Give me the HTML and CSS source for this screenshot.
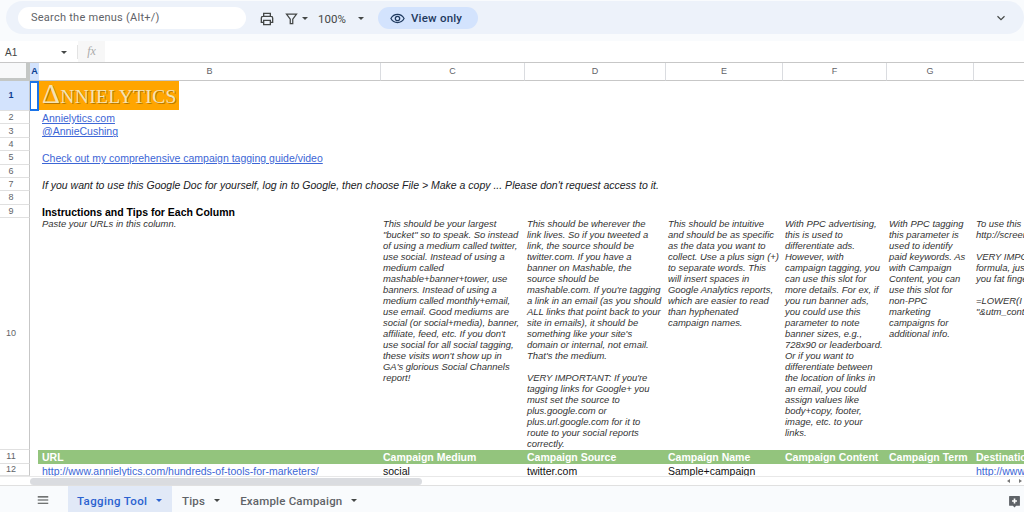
FILE: index.html
```html
<!DOCTYPE html>
<html>
<head>
<title>Campaign Tagging Tool</title>
<link rel="stylesheet" href="styles.css">
</head>
<body>
    <div class="toolbar-wrap">
        <div class="toolbar">
            <div class="search">Search the menus (Alt+/)</div>
            <svg class="icon print" viewBox="0 0 24 24"><path d="M7 8V3.5h10V8M6 17H3.5v-6.5A2.5 2.5 0 0 1 6 8h12a2.5 2.5 0 0 1 2.5 2.5V17H18M7 14h10v6.5H7z"/></svg>
            <svg class="icon filter" viewBox="0 0 24 24"><path d="M4 5h16l-6 8v7h-4v-7z"/></svg>
            <span class="caret filter-caret"></span>
            <span class="zoom-value">100%</span>
            <span class="caret zoom-caret"></span>
            <div class="view-only">
                <svg class="icon eye" viewBox="0 0 24 24"><path d="M1.5 12C4 7.5 7.5 5.5 12 5.5s8 2 10.5 6.5c-2.5 4.5-6 6.5-10.5 6.5S4 16.5 1.5 12z"/><circle cx="12" cy="12" r="3.5"/></svg>
                <span>View only</span>
            </div>
            <svg class="icon chevron" viewBox="0 0 24 24"><path d="M6 9l6 6 6-6"/></svg>
        </div>
    </div>

    <div class="formula-bar">
        <div class="name-box"><span>A1</span><span class="caret"></span></div>
        <div class="fx">fx</div>
    </div>

    <div class="sheet">
        <div class="grid">
            <div class="corner"></div>
            <div class="col-head selected">A</div>
            <div class="col-head">B</div>
            <div class="col-head">C</div>
            <div class="col-head">D</div>
            <div class="col-head">E</div>
            <div class="col-head">F</div>
            <div class="col-head">G</div>
            <div class="col-head"></div>

            <div class="row-head selected">1</div>
            <div class="cell-a1"></div>
            <div class="logo-cell"><div class="logo"><span class="logo-delta">Δ</span>NNIELYTICS</div></div>

            <div class="row-head small">2</div>
            <div class="line wide"><a href="#">Annielytics.com</a></div>
            <div class="row-head small">3</div>
            <div class="line wide"><a href="#">@AnnieCushing</a></div>
            <div class="row-head small">4</div>
            <div class="line wide"></div>
            <div class="row-head small">5</div>
            <div class="line wide"><a href="#">Check out my comprehensive campaign tagging guide/video</a></div>
            <div class="row-head small">6</div>
            <div class="line wide"></div>
            <div class="row-head small">7</div>
            <div class="line wide"><em>If you want to use this Google Doc for yourself, log in to Google, then choose File &gt; Make a copy ... Please don't request access to it.</em></div>
            <div class="row-head small">8</div>
            <div class="line wide"></div>
            <div class="row-head small">9</div>
            <div class="line wide"><strong>Instructions and Tips for Each Column</strong></div>

            <div class="row-head">10</div>
            <div class="spacer"></div>
            <div class="note">Paste your URLs in this column.</div>
            <div class="note">This should be your largest<br>"bucket" so to speak. So instead<br>of using a medium called twitter,<br>use social. Instead of using a<br>medium called<br>mashable+banner+tower, use<br>banners. Instead of using a<br>medium called monthly+email,<br>use email. Good mediums are<br>social (or social+media), banner,<br>affiliate, feed, etc. If you don't<br>use social for all social tagging,<br>these visits won't show up in<br>GA's glorious Social Channels<br>report!</div>
            <div class="note">This should be wherever the<br>link lives. So if you tweeted a<br>link, the source should be<br>twitter.com. If you have a<br>banner on Mashable, the<br>source should be<br>mashable.com. If you're tagging<br>a link in an email (as you should<br>ALL links that point back to your<br>site in emails), it should be<br>something like your site's<br>domain or internal, not email.<br>That's the medium.<br><br>VERY IMPORTANT: If you're<br>tagging links for Google+ you<br>must set the source to<br>plus.google.com or<br>plus.url.google.com for it to<br>route to your social reports<br>correctly.</div>
            <div class="note">This should be intuitive<br>and should be as specific<br>as the data you want to<br>collect. Use a plus sign (+)<br>to separate words. This<br>will insert spaces in<br>Google Analytics reports,<br>which are easier to read<br>than hyphenated<br>campaign names.</div>
            <div class="note">With PPC advertising,<br>this is used to<br>differentiate ads.<br>However, with<br>campaign tagging, you<br>can use this slot for<br>more details. For ex, if<br>you run banner ads,<br>you could use this<br>parameter to note<br>banner sizes, e.g.,<br>728x90 or leaderboard.<br>Or if you want to<br>differentiate between<br>the location of links in<br>an email, you could<br>assign values like<br>body+copy, footer,<br>image, etc. to your<br>links.</div>
            <div class="note">With PPC tagging<br>this parameter is<br>used to identify<br>paid keywords. As<br>with Campaign<br>Content, you can<br>use this slot for<br>non-PPC<br>marketing<br>campaigns for<br>additional info.</div>
            <div class="note">To use this<br>http://screen<br><br>VERY IMPO<br>formula, jus<br>you fat finge<br><br>=LOWER(I<br>"&amp;utm_cont</div>

            <div class="row-head">11</div>
            <div class="spacer"></div>
            <div class="th first">URL</div>
            <div class="th">Campaign Medium</div>
            <div class="th">Campaign Source</div>
            <div class="th">Campaign Name</div>
            <div class="th">Campaign Content</div>
            <div class="th">Campaign Term</div>
            <div class="th">Destination</div>

            <div class="row-head">12</div>
            <div class="spacer"></div>
            <div class="td first"><a href="#">http://www.annielytics.com/hundreds-of-tools-for-marketers/</a></div>
            <div class="td">social</div>
            <div class="td">twitter.com</div>
            <div class="td">Sample+campaign</div>
            <div class="td"></div>
            <div class="td"></div>
            <div class="td"><a href="#">http://www</a></div>
        </div>
    </div>

    <div class="scrollbar">
        <div class="thumb"></div>
        <div class="scroll-arrows">
            <span class="arrow left"></span>
            <span class="arrow right"></span>
        </div>
    </div>

    <div class="tabs">
        <svg class="icon menu" viewBox="0 0 24 24"><path d="M3 6.5h18M3 12h18M3 17.5h18"/></svg>
        <div class="tab active">Tagging Tool<span class="caret"></span></div>
        <div class="tab">Tips<span class="caret"></span></div>
        <div class="tab">Example Campaign<span class="caret"></span></div>
        <svg class="add-note" viewBox="0 0 24 24"><path d="M3 2h18a1 1 0 0 1 1 1v16a1 1 0 0 1-1 1h-6l-3 3-3-3H3a1 1 0 0 1-1-1V3a1 1 0 0 1 1-1z"/><path class="plus" d="M12 6.5v9M7.5 11h9"/></svg>
    </div>
</body>
</html>
```

FILE: styles.css
```css
* {
    box-sizing: border-box;
}
body {
    margin: 0;
    width: 1024px;
    height: 512px;
    overflow: hidden;
    display: flex;
    flex-direction: column;
    background: #fff;
    font-family: "Liberation Sans", Arial, sans-serif;
    color: #202124;
}
a {
    color: #3c66d6;
    text-decoration: underline;
}
.icon {
    fill: none;
    stroke: #444746;
    stroke-width: 2;
    flex: none;
}
.caret {
    display: inline-block;
    flex: none;
    width: 0;
    height: 0;
    border-left: 3px solid transparent;
    border-right: 3px solid transparent;
    border-top: 3px solid #444746;
}

/* top toolbar */
.toolbar-wrap {
    height: 41px;
    padding: 1px 0 7px 6px;
    background: #f9fbfd;
}
.toolbar {
    height: 33px;
    display: flex;
    align-items: center;
    padding-left: 12px;
    background: #edf2fa;
    border-radius: 17px;
}
.search {
    width: 228px;
    height: 22px;
    margin-right: 13px;
    padding-left: 13px;
    border-radius: 11px;
    background: #fff;
    font: 11px/21px Roboto, sans-serif;
    letter-spacing: 0.25px;
    color: #5f6368;
}
.print {
    width: 16px;
    height: 16px;
    margin: 2px 9px 0 0;
}
.filter {
    width: 15px;
    height: 15px;
    margin: 2px 3px 0 0;
}
.filter-caret {
    margin: 2px 10px 0 0;
}
.zoom-value {
    width: 30px;
    margin: 2px 10px 0 0;
    font: 11.5px Roboto, sans-serif;
    color: #444746;
}
.zoom-caret {
    margin: 2px 14px 0 0;
}
.view-only {
    width: 100px;
    height: 22px;
    display: flex;
    align-items: center;
    gap: 6px;
    margin-top: 1px;
    padding-left: 12px;
    border-radius: 11px;
    background: #d3e3fd;
    font: 500 11.5px Roboto, sans-serif;
    letter-spacing: 0.2px;
    color: #1f3a5f;
}
.eye {
    width: 15px;
    height: 15px;
    stroke: #1f3a5f;
}
.chevron {
    width: 14px;
    height: 14px;
    margin-left: auto;
    margin-right: 16px;
}

/* formula bar */
.formula-bar {
    height: 22px;
    display: flex;
    background: #fff;
    border-bottom: 1px solid #c7c7c7;
}
.name-box {
    width: 78px;
    display: flex;
    align-items: center;
    justify-content: space-between;
    padding: 0 10px 0 5px;
    font-size: 10px;
    color: #444746;
    border-right: 1px solid #e3e3e3;
    margin: 4px 0 3px;
}
.fx {
    width: 27px;
    background: #f7f7f7;
    font: italic 12px/21px "Liberation Serif", serif;
    color: #aaa;
    text-align: center;
}

/* spreadsheet */
.sheet {
    height: 413px;
    overflow: hidden;
    flex: none;
}
.grid {
    display: grid;
    width: 1180px;
    grid-template-columns: 30px 9px 341px 144px 141px 117px 104px 87px 207px;
    grid-template-rows: 18px 30px repeat(8, 13.375px) 232px 14px 12px;
    font-size: 10.5px;
    line-height: 13px;
}
.corner {
    background: #f8f9fa;
    border-right: 4px solid #c4c7c5;
    border-bottom: 3px solid #c4c7c5;
}
.col-head {
    display: flex;
    align-items: center;
    justify-content: center;
    font-size: 9px;
    color: #5f6368;
    background: #fff;
    border-left: 1px solid #dadce0;
    border-bottom: 1px solid #c7c7c7;
}
.col-head.selected {
    background: #d3e3fd;
    color: #0b3d91;
    font-weight: bold;
    border-left: 0;
}
.col-head.selected + .col-head {
    border-left: 0;
}
.row-head {
    grid-column: 1;
    display: flex;
    align-items: center;
    justify-content: center;
    padding-right: 7px;
    font-size: 9px;
    color: #5f6368;
    background: #fff;
    border-right: 1px solid #c7c7c7;
    border-bottom: 1px solid #e0e0e0;
}
.row-head.small {
    padding-top: 1px;
}
.row-head.selected {
    background: #d3e3fd;
    color: #0b3d91;
    font-weight: bold;
}
.cell-a1 {
    border: 2px solid #1a73e8;
    border-left-width: 1px;
}
.logo-cell {
    grid-column: 3 / -1;
}
.logo {
    width: 140px;
    height: 29px;
    padding: 1px 0 0 3px;
    background: #ffa500;
    font: 19.5px/29px "Liberation Serif", serif;
    letter-spacing: 0.35px;
    color: #f3e3b5;
    text-shadow: 1px 1px 0 rgba(120, 80, 0, 0.55);
    white-space: nowrap;
}
.logo-delta {
    font-size: 28px;
    line-height: 20px;
}
.line {
    grid-column: 3 / -1;
    padding: 1px 0 0 3px;
    white-space: nowrap;
    line-height: 13px;
}
.line strong {
    color: #000;
}
.spacer {
    grid-column: 2;
}
.note {
    padding-left: 3px;
    font-size: 9.45px;
    font-style: italic;
    line-height: 11px;
    color: #333;
    white-space: nowrap;
}
.th {
    padding-left: 3px;
    background: #93c47d;
    color: #fff;
    font-weight: bold;
    white-space: nowrap;
    line-height: 14px;
}
.th.first {
    margin-left: -1px;
    padding-left: 4px;
}
.td {
    padding-left: 3px;
    white-space: nowrap;
    line-height: 14px;
    color: #111;
}

/* horizontal scroll */
.scrollbar {
    height: 10px;
    display: flex;
    align-items: center;
    justify-content: space-between;
    flex: none;
    padding-left: 30px;
    background: #fff;
    border-top: 1px solid #e8e8e8;
    border-bottom: 1px solid #e0e0e0;
}
.thumb {
    width: 392px;
    height: 7px;
    border-radius: 4px;
    background: #dadce0;
}
.scroll-arrows {
    display: flex;
    gap: 9px;
    padding-right: 2px;
}
.arrow {
    width: 0;
    height: 0;
    border-top: 2.5px solid transparent;
    border-bottom: 2.5px solid transparent;
}
.arrow.left {
    border-right: 3px solid #777;
}
.arrow.right {
    border-left: 3px solid #777;
}

/* sheet tabs */
.tabs {
    flex: 1;
    display: flex;
    align-items: stretch;
    background: #f9fbfd;
    position: relative;
}
.menu {
    width: 14px;
    height: 14px;
    margin: 7px 18px 0 36px;
}
.tab {
    display: flex;
    align-items: center;
    gap: 9px;
    padding: 3px 10px 0 10px;
    font: 500 11.5px Roboto, sans-serif;
    letter-spacing: 0.2px;
    color: #5f6368;
}
.tab.active {
    width: 104px;
    padding-left: 9px;
    padding-right: 0;
    letter-spacing: 0.35px;
    background: #e1e9f7;
    color: #2b62d0;
}
.tab.active .caret {
    border-top-color: #2b62d0;
}
.add-note {
    position: absolute;
    right: 3px;
    top: 9px;
    width: 13px;
    height: 13px;
    fill: #5f6368;
}
.add-note .plus {
    fill: none;
    stroke: #fff;
    stroke-width: 3;
}
```
